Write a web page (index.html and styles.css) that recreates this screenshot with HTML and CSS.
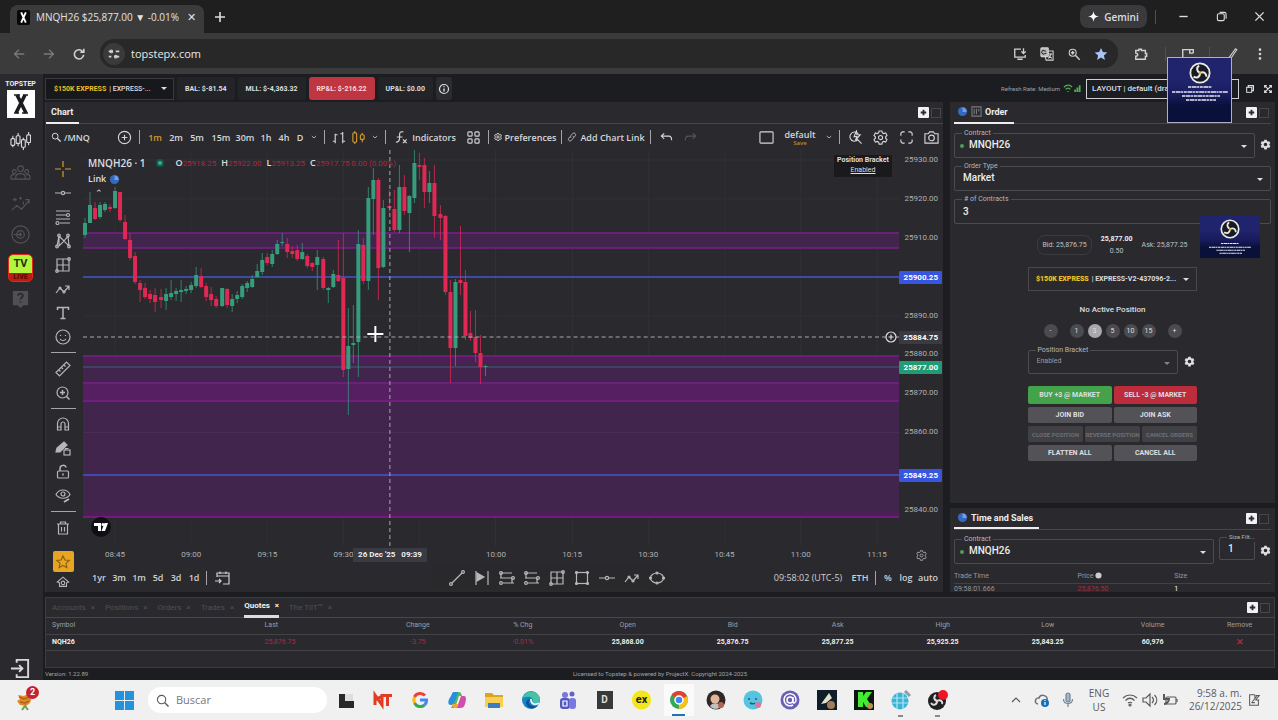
FILE: index.html
```html
<!DOCTYPE html>
<html lang="en">
<head>
<meta charset="utf-8">
<title>MNQH26 $25,877.00 ▼ -0.01%</title>
<link rel="stylesheet" href="styles.css">
</head>
<body>
<svg class="defs" aria-hidden="true">
  <symbol id="down" viewBox="0 0 16 16"><path d="M4.500 6.500l3.500 3 3.500-3"/></symbol>
  <symbol id="gear" viewBox="0 0 16 16"><path d="M6.500 1h3l.5 2 1.500.8 2-.6 1.400 2.500-1.400 1.500v1.600l1.400 1.500-1.400 2.500-2-.6-1.500.8-.5 2h-3l-.5-2-1.500-.8-2 .6-1.400-2.500 1.400-1.500V7.200L1.100 5.700l1.400-2.500 2 .6L6 3z"/><circle cx="8" cy="8" r="2.200"/></symbol>
  <symbol id="cog" viewBox="0 0 16 16"><path fill="currentColor" stroke="none" fill-rule="evenodd" d="M6.300 1h3.400l.5 2 1.200.7 2-.6 1.700 3-1.500 1.300v1.300l1.500 1.300-1.700 3-2-.6-1.200.7-.5 2H6.300l-.5-2-1.200-.7-2 .6-1.700-3 1.500-1.300V7.400L.9 6.100l1.700-3 2 .6L5.800 3zM8 5.400a2.600 2.600 0 100 5.200 2.600 2.600 0 000-5.200z"/></symbol>
  <symbol id="hline" viewBox="0 0 16 16"><path d="M0 8h6M10 8h6"/><circle cx="8" cy="8" r="1.600"/></symbol>
  <symbol id="fib" viewBox="0 0 16 16"><path d="M1 2h14M1 6h10M1 10h14M5 14h10"/><circle cx="13" cy="6" r="1.500"/><circle cx="2.500" cy="14" r="1.500"/></symbol>
  <symbol id="fib2" viewBox="0 0 16 16"><path d="M2 3h11M1 8h12M4 13h11M2 3v5M13 8v5"/><circle cx="2" cy="3" r="1.400"/><circle cx="14" cy="8" r="1.400"/><circle cx="2" cy="13" r="1.400"/></symbol>
  <symbol id="xabcd" viewBox="0 0 16 16"><path d="M2 13L4 3l5 5 4-5 1 10-5-5-5 5zM4 3v9"/><circle cx="4" cy="2.500" r="1.300"/><circle cx="13" cy="2.500" r="1.300"/><circle cx="2" cy="13.500" r="1.300"/><circle cx="14" cy="13.500" r="1.300"/></symbol>
  <symbol id="gann" viewBox="0 0 16 16"><path d="M2 2h12v12H2zM8 2v12M2 8h12M5 8h3V5"/><circle cx="2" cy="14" r="1.300"/><circle cx="14" cy="2" r="1.300"/></symbol>
  <symbol id="wave" viewBox="0 0 16 16"><path d="M1 12l4-5 4 4 5-6M10 5h4v4"/><circle cx="5" cy="7" r="1"/><circle cx="9" cy="11" r="1"/></symbol>
  <symbol id="pop" viewBox="0 0 12 12"><rect width="12" height="12" rx="1" fill="#f2f2f2" stroke="none"/><path d="M6 3v6M3 6h6" stroke="#2b2b2f" stroke-width="2"/></symbol>
  <symbol id="globe" viewBox="0 0 12 12"><circle cx="6" cy="6" r="5" fill="#3568c0" stroke="none"/><path d="M6 1.500v5h4.500A4.600 4.600 0 006 1.500z" fill="#6f9fe2" stroke="none"/></symbol>
  <symbol id="obs" viewBox="0 0 24 24"><circle cx="12" cy="12" r="10.500" fill="#161a26" stroke="#ece9e1" stroke-width="2"/><path d="M12 12c-4-2-4-6-1-8M12 12c4-2 7 0 7 4M12 12c0 5-4 6-7 4" stroke="#ece9e1" stroke-width="2.200"/><circle cx="12" cy="12" r="1.500" fill="#ddba3c" stroke="none"/></symbol>
  <symbol id="dots" viewBox="0 0 60 16"><path d="M18 2h24M2 7h56M12 11h38M16 15h30" stroke="#e6e8f4" stroke-width="1.500" stroke-dasharray="3 .6 5 .5 2 .7"/></symbol>
</svg>

<header class="tabstrip">
  <div class="tab"><svg class="favicon" viewBox="0 0 14 16"><rect width="14" height="16" rx="2" fill="#080808" stroke="none"/><path d="M4.500 2.500l5 11M9.500 2.500l-5 11" stroke="#fff" stroke-width="2"/></svg><span>MNQH26 $25,877.00 ▼ -0.01%</span><button aria-label="Close tab">✕</button></div>
  <button class="newtab" aria-label="New tab"><svg viewBox="0 0 16 16"><path d="M8 3v10M3 8h10" stroke-width="1.600"/></svg></button>
  <span class="grow"></span>
  <button class="gemini"><svg viewBox="0 0 12 12"><path d="M6 0c.5 4 2 5.500 6 6-4 .5-5.500 2-6 6-.5-4-2-5.500-6-6 4-.5 5.500-2 6-6z" fill="#fff" stroke="none"/></svg>Gemini</button>
  <i class="vr"></i>
  <div class="winbtns">
    <button aria-label="Minimize"><svg viewBox="0 0 12 12"><path d="M1.500 6h9" stroke-width="1.500"/></svg></button>
    <button aria-label="Restore"><svg viewBox="0 0 12 12"><rect x="1.500" y="3" width="7.500" height="7.500" rx="1.500"/><path d="M4 1.500h5a2 2 0 012 2v5"/></svg></button>
    <button aria-label="Close"><svg viewBox="0 0 12 12"><path d="M1.500 1.500l9 9M10.500 1.500l-9 9" stroke-width="1.500"/></svg></button>
  </div>
</header>

<nav class="urlbar">
  <button class="dim" aria-label="Back"><svg viewBox="0 0 16 16"><path d="M14 8H3M8 3L3 8l5 5" stroke-width="1.600"/></svg></button>
  <button class="dim" aria-label="Forward"><svg viewBox="0 0 16 16"><path d="M2 8h11M8 3l5 5-5 5" stroke-width="1.600"/></svg></button>
  <button aria-label="Reload"><svg viewBox="0 0 16 16"><path d="M12.500 5.500A5.300 5.300 0 1013.300 9M13.500 2v4h-4" stroke-width="1.800"/></svg></button>
  <div class="omnibox">
    <span class="siteinfo"><svg viewBox="0 0 16 16"><path d="M2 5h4M9 11h5" stroke-width="2"/><path d="M10 5h4M2 11h3" stroke-width="2"/><circle cx="5" cy="5" r="1.500"/><circle cx="10" cy="11" r="1.500"/></svg></span>
    <input aria-label="Address" value="topstepx.com">
    <button aria-label="Install"><svg viewBox="0 0 16 16"><path d="M9 2.500H2v9h12V9M5 14h6M12 1.500v6M9.500 5l2.500 2.500L14.500 5" stroke-width="1.500"/></svg></button>
    <button aria-label="Translate"><svg viewBox="0 0 16 16"><rect x="1" y="1" width="8.500" height="10" rx="1" fill="#bbb"/><path d="M9.500 4.500H15V15H7l-1-4M9 8h5M11.500 7v1M9.500 13l3.500-5M10.500 10l3 3"/><path d="M7 4.500H5.200a2 2 0 100 3h1.500V6.500" stroke="#333"/></svg></button>
    <button aria-label="Zoom"><svg viewBox="0 0 16 16"><circle cx="6.500" cy="6.500" r="4"/><path d="M9.500 9.500l5 5M4.500 6.500h4M6.500 4.500v4" stroke-width="1.600"/></svg></button>
    <button aria-label="Bookmark"><svg viewBox="0 0 16 16"><path d="M8 1l2.100 4.800 5.100.5-3.900 3.400 1.200 5.100L8 12.100l-4.500 2.700 1.200-5.100L.8 6.300l5.100-.5z" fill="#a9c3f8" stroke="none"/></svg></button>
  </div>
  <button class="ext" aria-label="Extensions"><svg viewBox="0 0 16 16"><path d="M2 4h3.500V2.500h3V4H13v3.500h1.500v3H13V14H2v-3.500c3 0 3-3.500 0-3.500z" stroke-width="1.600"/></svg></button>
  <i class="vr"></i>
  <button class="ext2" aria-label="Side panel"><svg viewBox="0 0 16 16"><path d="M8 13H2V3h12v4M10 3v4h4" stroke-width="1.600"/></svg></button>
  <i class="vr"></i>
  <button class="ext2" aria-label="Edit"><svg viewBox="0 0 16 16"><path d="M4 13L12 2l1.500 1L6 14z"/></svg></button>
  <button aria-label="Menu"><svg viewBox="0 0 16 16"><g fill="currentColor" stroke="none"><circle cx="8" cy="3" r="1.500"/><circle cx="8" cy="8" r="1.500"/><circle cx="8" cy="13" r="1.500"/></g></svg></button>
</nav>

<main class="app">
  <aside class="side">
    <div class="brand">TOPSTEP</div>
    <div class="brandx"><svg viewBox="0 0 28 28"><path d="M10 5l9 18M18 5L9 23" stroke="#1c1c1f" stroke-width="3.600"/><path d="M7 5h6M16 5h5M7 23h5M15 23h6" stroke="#1c1c1f" stroke-width="1.500"/></svg></div>
    <button class="on" aria-label="Charts"><svg viewBox="0 0 22 22"><path d="M3 5v12M8.500 2v14M14 7v13M19.500 1v14"/><g fill="#2a2a2e"><rect x="1" y="8" width="4" height="7" rx="1"/><rect x="6.500" y="5" width="4" height="8" rx="1"/><rect x="12" y="9" width="4" height="8" rx="1"/><rect x="17.500" y="4" width="4" height="8" rx="1"/></g></svg></button>
    <button aria-label="Leaderboard"><svg viewBox="0 0 22 22"><circle cx="11" cy="7" r="3"/><circle cx="4.500" cy="10" r="2"/><circle cx="17.500" cy="10" r="2"/><path d="M6 18v-2c0-5 10-5 10 0v2zM1 18v-2c0-2 2-3 4-3M21 18v-2c0-2-2-3-4-3M1 18h20"/></svg></button>
    <button aria-label="Analysis"><svg viewBox="0 0 22 22"><path d="M2 18l5-5 5 4 8-9M16 7h4v4M5 5v4M3 7h4M11 4v3M9.500 5.500h3M14 9v3"/></svg></button>
    <button aria-label="Replay"><svg viewBox="0 0 22 22"><circle cx="11" cy="11" r="9"/><circle cx="11" cy="11" r="4"/><path d="M4 11h8M10 9l2 2-2 2"/></svg></button>
    <button class="tv" aria-label="TV Live"><b>TV</b><em>LIVE</em></button>
    <button aria-label="Help"><svg viewBox="0 0 22 22"><path d="M3 2h16v15h-5l-3 3-3-3H3z" fill="#505053" stroke="none"/><path d="M8.500 7c0-3 5-3 5 0 0 2-2.500 2-2.500 4M11 13v1.500" stroke="#29292d" stroke-width="1.800"/></svg></button>
    <span class="grow"></span>
    <button class="on out" aria-label="Log out"><svg viewBox="0 0 22 22"><path d="M7 5V2h12v18H7v-3M1 11h12M9.500 7.500L13 11l-3.500 3.500" stroke-width="2"/></svg></button>
  </aside>

  <div class="work">
    <div class="accountbar">
      <div class="acct"><b>$150K EXPRESS</b> | EXPRESS-...<i class="tri"></i></div>
      <span class="stat">BAL: $-81.54</span>
      <span class="stat">MLL: $-4,363.32</span>
      <span class="stat loss">RP&amp;L: $-216.22</span>
      <span class="stat">UP&amp;L: $0.00</span>
      <button class="info" aria-label="Info"><svg viewBox="0 0 12 12"><circle cx="6" cy="6" r="4.500"/><path d="M6 5.500v3M6 3.200v1" stroke-width="1.400"/></svg></button>
      <span class="grow"></span>
      <span class="feed">Refresh Rate: Medium</span>
      <svg class="sig" viewBox="0 0 20 10"><path d="M1 3.500c3-3 7-3 9 0M3 6c1.500-2 4-2 5 0" stroke="#4caf50" stroke-width="1.500"/><path d="M5.500 8v1M13.500 6v3M16 4v5M18.500 1.500V9" stroke="#4caf50" stroke-width="2"/></svg>
      <select class="layout" aria-label="Layout"><option>LAYOUT | default (draft)</option></select>
      <button class="mini" aria-label="Windows"><svg viewBox="0 0 12 12"><rect x="2" y="4" width="6" height="6"/><path d="M4 4V2h6v6H8" stroke-width="1.600"/></svg></button>
      <button class="mini" aria-label="Fullscreen"><svg viewBox="0 0 12 12"><path d="M2 4.500V2h2.500M7.500 2H10v2.500M10 7.500V10H7.500M4.500 10H2V7.500M2.500 2.500l7 7M9.500 2.500l-7 7" stroke-width="1.400"/></svg></button>
    </div>

    <div class="panels">
      <section class="chart">
        <div class="phead"><h2>Chart</h2><span class="grow"></span><svg class="pop"><use href="#pop"/></svg><i class="box"></i></div>
        <div class="ctools">
          <button class="c61 txt"><svg viewBox="0 0 12 12"><circle cx="5" cy="5" r="3.500"/><path d="M7.500 7.500l4 4" stroke-width="1.500"/></svg>/MNQ</button>
          <button class="c24" aria-label="Compare"><svg viewBox="0 0 16 16"><circle cx="8" cy="8" r="6.500"/><path d="M8 5v6M5 8h6"/></svg></button>
          <i class="sep"></i>
          <button class="c24 gold">1m</button><button class="c18">2m</button><button class="c24">5m</button><button class="c24">15m</button><button class="c24">30m</button><button class="c18">1h</button><button class="c18">4h</button><button class="c14">D</button>
          <button class="c14" aria-label="Intervals"><svg><use href="#down"/></svg></button>
          <i class="sep"></i>
          <button class="c20" aria-label="Bars"><svg viewBox="0 0 16 16"><path d="M2 12h2.500V4M4.500 4v10M4.500 5H7M10 4h2.500v8H15M12.500 2v12"/></svg></button>
          <button class="c20 gold" aria-label="Candles"><svg viewBox="0 0 16 16"><rect x="2" y="3" width="4" height="10" rx="1"/><rect x="10" y="5" width="4" height="5" rx="1"/><path d="M4 1v2M4 13v2M12 3v2M12 10v3"/></svg></button>
          <button class="c14" aria-label="Chart styles"><svg><use href="#down"/></svg></button>
          <i class="sep"></i>
          <button class="c72 ind"><svg viewBox="0 0 16 16"><path d="M10 2C5 1 6 5 6 8s-.5 5-4 5M3 7.500h6M9.500 10l4 4M13.500 10l-4 4"/></svg>Indicators</button>
          <button class="c24" aria-label="Templates"><svg viewBox="0 0 16 16"><rect x="2" y="2" width="4.500" height="4.500" rx="1"/><rect x="9.500" y="2" width="4.500" height="4.500" rx="1"/><rect x="2" y="9.500" width="4.500" height="4.500" rx="1"/><rect x="9.500" y="9.500" width="4.500" height="4.500" rx="1"/></svg></button>
          <i class="sep"></i>
          <button class="c66 pref"><svg><use href="#gear"/></svg>Preferences</button>
          <i class="sep"></i>
          <button class="c82"><svg viewBox="0 0 16 16"><path d="M6.500 9.500c-2-2-1-3 0-4l2.500-3c3-2.500 6.500 1 4 4l-2 2M9.500 6.500c2 2 1 3 0 4L7 13.500c-3 2.500-6.500-1-4-4l2-2"/></svg>Add Chart Link</button>
          <i class="sep"></i>
          <button class="c24" aria-label="Undo"><svg viewBox="0 0 16 16"><path d="M5.500 3.500L2.500 6.500l3 3M2.500 6.500h8c2 0 3 1.500 3 4.500"/></svg></button>
          <button class="c24 faint" aria-label="Redo"><svg viewBox="0 0 16 16"><path d="M10.500 3.500l3 3-3 3M13.500 6.500h-8c-2 0-3 1.500-3 4.500"/></svg></button>
          <span class="grow"></span>
          <button class="c24" aria-label="Layout setup"><svg viewBox="0 0 16 16"><rect x="1" y="2" width="14" height="12" rx="1"/></svg></button>
          <button class="c44 save"><span>default</span><small>Save</small></button>
          <button class="c14" aria-label="Manage layouts"><svg><use href="#down"/></svg></button>
          <i class="sep"></i>
          <button class="c24" aria-label="Quick search"><svg viewBox="0 0 16 16"><path d="M11 4A5 5 0 106 12c2 0 4-.5 5-2M10 10l4.500 4.500M9 1L6.500 7h3L8 11l5-6H9.500z"/></svg></button>
          <button class="c26" aria-label="Settings"><svg><use href="#gear"/></svg></button>
          <button class="c26" aria-label="Fullscreen"><svg viewBox="0 0 16 16"><path d="M2 6V3.500L3.500 2H6M10 2h2.500L14 3.500V6M14 10v2.500L12.500 14H10M6 14H3.500L2 12.500V10"/></svg></button>
          <button class="c24" aria-label="Snapshot"><svg viewBox="0 0 16 16"><path d="M1 4h3.500L6 2h4l1.500 2H15v10H1z"/><circle cx="8" cy="8.500" r="3"/></svg></button>
        </div>

        <div class="cbody">
          <div class="draw">
            <button class="gold" aria-label="Cross"><svg viewBox="0 0 16 16"><path d="M8 0v6M8 10v6M0 8h6M10 8h6"/></svg></button>
            <button aria-label="Horizontal line"><svg><use href="#hline"/></svg></button>
            <button aria-label="Fibonacci"><svg><use href="#fib"/></svg></button>
            <button aria-label="Patterns"><svg><use href="#xabcd"/></svg></button>
            <button aria-label="Gann box"><svg><use href="#gann"/></svg></button>
            <button aria-label="Waves"><svg><use href="#wave"/></svg></button>
            <button aria-label="Text"><svg viewBox="0 0 16 16"><path d="M2.500 5V2.500h11V5M8 2.500v11M5.500 13.500h5" stroke-width="1.500"/></svg></button>
            <button aria-label="Icons"><svg viewBox="0 0 16 16"><circle cx="8" cy="8" r="7"/><path d="M5 10c1.500 2 4.500 2 6 0M5.500 6v1M10.500 6v1"/></svg></button>
            <hr>
            <button aria-label="Measure"><svg viewBox="0 0 16 16"><path d="M1 11.500L11.500 1 15 4.500 4.500 15zM4 9l1.500 1.500M6.500 6.500L8 8M9 4l1.500 1.500"/></svg></button>
            <button aria-label="Zoom in"><svg viewBox="0 0 16 16"><circle cx="7.500" cy="7.500" r="5.500"/><path d="M11.500 11.500l3 3M7.500 5v5M5 7.500h5" stroke-width="1.500"/></svg></button>
            <hr>
            <button aria-label="Magnet"><svg viewBox="0 0 16 16"><path d="M2.500 14V7.500a5.500 5.500 0 0111 0V14H10V8a2 2 0 00-4 0v6zM2.500 11H6M10 11h3.500"/></svg></button>
            <button aria-label="Keep drawing"><svg viewBox="0 0 16 16"><path d="M1 12l1-4 7-6 3 3-7 7z" fill="currentColor"/><rect x="9" y="10" width="6" height="5"/><path d="M10.500 10V8.500h3"/></svg></button>
            <button aria-label="Lock"><svg viewBox="0 0 16 16"><rect x="2.500" y="7" width="11" height="7" rx="1"/><path d="M5 7V4.500c0-4 6-4 6-1M8 9.500v2" stroke-width="1.500"/></svg></button>
            <button aria-label="Hide"><svg viewBox="0 0 16 16"><path d="M1 6.500c3-6 11-6 14 0-3 5-11 5-14 0z"/><circle cx="8" cy="6" r="2"/><path d="M9 14l5-3" stroke-width="2"/></svg></button>
            <hr>
            <button aria-label="Remove"><svg viewBox="0 0 16 16"><path d="M2 4h12M5.500 4V2h5v2M3.500 4v10h9V4M6.500 7v4.500M9.500 7v4.500"/></svg></button>
            <button class="star" aria-label="Favorites"><svg viewBox="0 0 16 16"><path d="M8 2l1.900 4 4.300.4-3.200 3 .9 4.300L8 11.500l-3.900 2.200.9-4.300-3.200-3L6.100 6z" stroke="#8c6010"/></svg></button>
            <button class="last" aria-label="More"><svg viewBox="0 0 16 16"><path d="M1.500 8L8 2.500 14.500 8 12 9v4H4V9z"/><circle cx="8" cy="9" r="2"/></svg></button>
          </div>

          <div class="cmain">
            <div class="plotrow">
              <div class="plot">
                <svg class="canvas" viewBox="83 150 815 396" preserveAspectRatio="none">
                  <path d="M115 150v396M191 150v396M267 150v396M343 150v396M419 150v396M495 150v396M572 150v396M648 150v396M724 150v396M800 150v396M876 150v396M83 160h815M83 199h815M83 238h815M83 316h815" stroke="#303035"/>
                  <path d="M83 233h815v15H83zM83 356h815v161H83z" fill="#42254c" stroke="none"/>
                  <path d="M83 383h815v18H83z" fill="#551f62" stroke="none"/>
                  <path d="M83 357h815v6H83zM83 511h815v6H83z" fill="#4c2054" stroke="none"/>
                  <path d="M83 432.500h815" stroke="#4a2c52"/>
                  <path d="M83 233h815M83 248h815M83 356h815M83 383h815M83 401h815M83 517h815" stroke="#7b1e8a" stroke-width="1.600"/>
                  <path d="M83 277h815M83 475h815" stroke="#4355cf" stroke-width="1.600"/>
                  <path d="M83 367h815" stroke="#40617a" stroke-width="1"/>
                  <path class="g" d="M85 218v20M90 192v31M100 202v17M105 202v10M115 187v22M166 288v22M171 280v20M176 288v13M181 280v22M186 286v8M191 282v11M196 267v21M222 288v19M232 294v18M237 291v12M242 284v15M247 281v11M252 275v13M257 264v14M262 253v22M272 250v17M277 240v15M282 233v13M302 243v17M317 250v40M328 287v16M333 270v18M348 308v107M353 305v58M358 230v147M368 187v103M373 168v67M383 200v68M399 165v68M409 195v57M414 150v53M429 171v32M455 279v87M485 365v11"/>
                  <path class="r" d="M95 202v18M110 204v8M120 192v30M125 215v25M130 233v27M135 252v32M140 280v22M145 283v16M150 290v13M155 288v24M161 289v19M201 268v20M206 283v18M211 287v19M216 296v12M227 288v20M267 253v12M287 238v20M292 246v12M297 245v16M307 254v14M312 262v9M323 257v33M338 240v42M343 233v144M363 238v46M378 178v122M389 190v22M394 190v42M404 175v40M419 153v27M424 158v50M434 165v73M440 205v35M445 215v80M450 280v103M460 226v69M465 270v70M470 311v30M475 310v52M480 335v49"/>
                  <path class="g body" d="M85 223v12M90 205v18M100 205v12M105 204v6M115 191v17M166 294v7M171 293v4M176 291v3M181 290v2M186 289v2M191 285v5M196 275v11M222 288v18M232 299v7M237 295v4M242 286v11M247 283v5M252 279v8M257 271v6M262 260v12M272 254v10M277 244v10M282 242v1M302 252v7M317 257v8M328 288v2M333 274v13M348 346v23M353 343v2M358 244v98M368 198v83M373 180v19M383 208v59M399 187v43M409 196v17M414 163v35M429 183v9M455 282v66M485 366v1"/>
                  <path class="r body" d="M95 208v11M110 207v2M120 192v28M125 222v17M130 240v18M135 256v26M140 283v7M145 288v9M150 294v5M155 295v7M161 297v3M201 276v11M206 286v11M211 294v6M216 299v7M227 289v16M267 257v6M287 244v8M292 251v3M297 250v9M307 256v10M312 263v4M323 259v29M338 275v6M343 278v92M363 245v36M378 180v88M389 206v2M394 209v21M404 187v24M419 165v2M424 165v27M434 183v33M440 214v4M445 216v76M450 292v56M460 280v3M465 282v54M470 333v5M475 337v16M480 353v14"/>
                  <path d="M83 337h815M389.500 150v396" stroke="#a8a8ac" stroke-dasharray="4 3"/>
                  <path d="M367 334h16M375 326v16" stroke="#fff" stroke-width="2"/>
                </svg>
                <div class="legend">
                  <p><b>MNQH26 · 1</b><i class="live"></i><span>O<em>25918.25</em></span><span>H<em>25922.00</em></span><span>L<em>25913.25</em></span><span>C<em>25917.75 0.00 (0.00%)</em></span></p>
                  <p class="lk">Link <svg><use href="#globe"/></svg></p>
                  <p class="up">⌃</p>
                </div>
                <div class="bracket"><b>Position Bracket</b><u>Enabled</u></div>
                <svg class="tvlogo" viewBox="0 0 20 20"><circle cx="10" cy="10" r="10" fill="#101014" stroke="none"/><path d="M3 6h7v8H7V9H3zM13.500 6H17l-3 8h-3.500z" fill="#fff" stroke="none"/><circle cx="12" cy="7.500" r="1.500" fill="#fff" stroke="none"/></svg>
                <svg class="addp" viewBox="0 0 12 12"><circle cx="6" cy="6" r="5" fill="#2a2a2e"/><path d="M6 3.500v5M3.500 6h5"/></svg>
              </div>
              <div class="prices">
                <span>25930.00</span><span>25920.00</span><span>25910.00</span><span></span><span>25890.00</span><span>25880.00</span><span>25870.00</span><span>25860.00</span><span></span><span>25840.00</span>
                <b class="tag blue" style="top:32%">25900.25</b><b class="tag grey" style="top:47.200%">25884.75</b><b class="tag green" style="top:54.800%">25877.00</b><b class="tag blue" style="top:82%">25849.25</b>
              </div>
            </div>
            <div class="timerow"><div class="times"><span>08:45</span><span>09:00</span><span>09:15</span><span>09:30</span><span></span><span>10:00</span><span>10:15</span><span>10:30</span><span>10:45</span><span>11:00</span><span>11:15</span><b>26 Dec '25 &nbsp; 09:39</b></div>
              <button class="axis" aria-label="Axis settings"><svg><use href="#gear"/></svg></button></div>
            <div class="ranges">
              <button class="c20">1yr</button><button class="c20">3m</button><button class="c20">1m</button><button class="c18">5d</button><button class="c18">3d</button><button class="c18">1d</button><i class="sep"></i>
              <button class="c24" aria-label="Go to date"><svg viewBox="0 0 16 16"><path d="M3 7V3h12v11H9M3 6h12M6 1.500V4M12 1.500V4M1 11h6M5 9l2 2-2 2"/></svg></button>
              <span class="grow2"></span>
              <div class="fav">
                <button aria-label="Trend line"><svg viewBox="0 0 16 16"><path d="M3 13L13 3"/><circle cx="2" cy="14" r="1.400"/><circle cx="14" cy="2" r="1.400"/></svg></button>
                <button aria-label="Flag"><svg viewBox="0 0 16 16"><path d="M2 1v14M14 1v14"/><path d="M3 3l7 4-7 4z" fill="currentColor"/></svg></button>
                <button aria-label="Fibonacci"><svg><use href="#fib2"/></svg></button>
                <button aria-label="Fib extension"><svg><use href="#fib2"/></svg></button>
                <button aria-label="Gann"><svg><use href="#gann"/></svg></button>
                <button aria-label="Rectangle"><svg viewBox="0 0 16 16"><rect x="2.500" y="2.500" width="11" height="11"/><circle cx="2.500" cy="2.500" r="1"/><circle cx="13.500" cy="2.500" r="1"/><circle cx="2.500" cy="13.500" r="1"/><circle cx="13.500" cy="13.500" r="1"/></svg></button>
                <button aria-label="Horizontal"><svg><use href="#hline"/></svg></button>
                <button aria-label="Path"><svg><use href="#wave"/></svg></button>
                <button aria-label="Ellipse"><svg viewBox="0 0 16 16"><ellipse cx="8" cy="8" rx="6.500" ry="5"/><circle cx="8" cy="3" r="1"/><circle cx="8" cy="13" r="1"/><circle cx="1.500" cy="8" r="1"/><circle cx="14.500" cy="8" r="1"/></svg></button>
              </div>
              <span class="grow"></span>
              <button class="clock">09:58:02 (UTC-5)</button><button class="c24">ETH</button><i class="sep"></i><button class="c18">%</button><button class="c18">log</button><button class="c26">auto</button>
            </div>
          </div>
        </div>
      </section>

      <div class="right">
        <section class="order">
          <div class="phead"><h2><svg><use href="#globe"/></svg><svg viewBox="0 0 12 12"><path d="M1 1h10v10H1zM3.500 3v6M6 3v6M8.500 3v3" stroke="#77777c"/></svg>Order</h2><span class="grow"></span><svg class="pop"><use href="#pop"/></svg><i class="box"></i></div>
          <div class="frow"><div class="field dot"><label for="oc">Contract</label><select id="oc"><option>MNQH26</option></select></div><button class="cog" aria-label="Contract settings"><svg><use href="#cog"/></svg></button></div>
          <div class="field"><label for="ot">Order Type</label><select id="ot"><option>Market</option></select></div>
          <div class="field"><label for="oq"># of Contracts</label><input id="oq" value="3"></div>
          <div class="quote"><span class="bid">Bid: 25,876.75</span><span class="mid"><b>25,877.00</b>0.50</span><span>Ask: 25,877.25</span></div>
          <div class="acct2"><b>$150K EXPRESS</b><span>| EXPRESS-V2-437096-2...</span><i class="tri"></i></div>
          <p class="nopos">No Active Position</p>
          <div class="qty"><button>-</button><button class="gapl">1</button><button class="sel">3</button><button>5</button><button>10</button><button>15</button><button class="gapl">+</button></div>
          <div class="frow pb"><div class="field"><label for="pbk">Position Bracket</label><select id="pbk"><option>Enabled</option></select></div><button class="cog" aria-label="Bracket settings"><svg><use href="#cog"/></svg></button></div>
          <div class="acts">
            <button class="buy">BUY +3 @ MARKET</button><button class="sell">SELL -3 @ MARKET</button>
            <button class="two">JOIN BID</button><button class="two">JOIN ASK</button>
            <button class="three" disabled>CLOSE POSITION</button><button class="three" disabled>REVERSE POSITION</button><button class="three" disabled>CANCEL ORDERS</button>
            <button class="two">FLATTEN ALL</button><button class="two">CANCEL ALL</button>
          </div>
        </section>
        <section class="sales">
          <div class="phead"><h2><svg><use href="#globe"/></svg>Time and Sales</h2><span class="grow"></span><svg class="pop"><use href="#pop"/></svg><i class="box"></i></div>
          <div class="frow"><div class="field dot"><label for="sc">Contract</label><select id="sc"><option>MNQH26</option></select></div><div class="field small"><label for="sf">Size Filt...</label><input id="sf" value="1"></div><button class="cog" aria-label="Sales settings"><svg><use href="#cog"/></svg></button></div>
          <table><thead><tr><th>Trade Time</th><th>Price <svg viewBox="0 0 8 8"><circle cx="4" cy="4" r="3.500" fill="#ccc" stroke="none"/></svg></th><th>Size</th></tr></thead><tbody><tr><td>09:58:01.666</td><td class="neg">25,876.50</td><td class="w">1</td></tr></tbody></table>
        </section>
      </div>
    </div>

    <section class="quotes">
      <div class="qtabs"><button>Accounts<i>×</i></button><button>Positions<i>×</i></button><button>Orders<i>×</i></button><button>Trades<i>×</i></button><button class="act">Quotes<i>×</i></button><button>The TilT™<i>×</i></button><span class="grow"></span><svg class="pop"><use href="#pop"/></svg><i class="box"></i></div>
      <table>
        <colgroup><col class="k1"><col class="k2"><col><col><col><col><col><col><col><col><col class="k3"></colgroup>
        <thead><tr><th>Symbol</th><th>Last</th><th>Change</th><th>% Chg</th><th>Open</th><th>Bid</th><th>Ask</th><th>High</th><th>Low</th><th>Volume</th><th>Remove</th></tr></thead>
        <tbody><tr><td>NQH26</td><td class="neg">25,876.75</td><td class="neg">-3.75</td><td class="neg">-0.01%</td><td>25,868.00</td><td>25,876.75</td><td>25,877.25</td><td>25,925.25</td><td>25,843.25</td><td>60,976</td><td><button class="neg" aria-label="Remove NQH26">✕</button></td></tr></tbody>
      </table>
    </section>
    <footer><span>Version: 1.22.89</span><span>Licensed to Topstep &amp; powered by ProjectX. Copyright 2024-2025</span><span></span></footer>
  </div>
</main>

<div class="thumb t1"><svg class="logo"><use href="#obs"/></svg><svg class="lines"><use href="#dots"/></svg></div>
<div class="thumb t2"><svg class="logo"><use href="#obs"/></svg><svg class="lines"><use href="#dots"/></svg></div>

<div class="taskbar">
  <button class="weather" aria-label="Widgets"><svg viewBox="0 0 24 24"><path d="M4 7l6 1 5-3 3 4-2 6-4 3-6-1-3-4 3-2z" fill="#e08a26" stroke="none"/><path d="M5 9l5 2 5-2M6 14l5 1 4-2" stroke="#b4601a" stroke-width="1.500"/><path d="M8 22l3-4 3 4" stroke="#66a64b" stroke-width="2"/></svg><b>2</b></button>
  <button class="start" aria-label="Start"><svg viewBox="0 0 20 20"><path d="M0 0h9.500v9.500H0zM10.500 0H20v9.500h-9.500zM0 10.500h9.500V20H0zM10.500 10.500H20V20h-9.500z" fill="#2493dc" stroke="none"/></svg></button>
  <label class="search"><svg viewBox="0 0 14 14"><circle cx="6" cy="6" r="4.500"/><path d="M9.500 9.500l4 4" stroke-width="1.500"/></svg><input placeholder="Buscar" aria-label="Buscar"></label>
  <div class="apps">
    <button aria-label="Task view"><svg viewBox="0 0 20 20"><path d="M6 4h11v11H6z" fill="#ddd" stroke="none"/><path d="M3 4h6v7h9v7H3z" fill="#28282a" stroke="none"/></svg></button>
    <button aria-label="NinjaTrader"><svg viewBox="0 0 20 20"><path d="M2 15V5l7 10V4M8 5.500h11M14.500 6v10M2 10l9-5" stroke="#e33b22" stroke-width="3"/></svg></button>
    <button aria-label="Google"><svg viewBox="0 0 20 20"><g stroke-width="3"><path d="M15 5.500A6.500 6.500 0 004.500 7" stroke="#ea4335"/><path d="M4.500 7a7 7 0 000 6" stroke="#fbbc05"/><path d="M4.500 13a6.500 6.500 0 0010 2" stroke="#34a853"/><path d="M14.500 15a6 6 0 002-5H10" stroke="#4285f4"/></g></svg></button>
    <button aria-label="Copilot"><svg viewBox="0 0 20 20"><path d="M7 2h5L8 15H4c-4 0-3-5 0-9 1-2 1-4 3-4z" fill="#278ee0" stroke="none"/><path d="M11 2c3 0 3 1 4 4h-3L8 18H4l5-9z" fill="#58b757" stroke="none"/><path d="M14 6h3c3 0 2 5 1 8s-2 4-5 4H8c2 0 3-3 3.500-5z" fill="#d04fae" stroke="none"/><path d="M5 14h6l-1 4H8c-2 0-3-2-3-4z" fill="#f0a636" stroke="none"/></svg></button>
    <button aria-label="Explorer"><svg viewBox="0 0 20 20"><path d="M1 3h7l2 2h9v12H1z" fill="#dca520" stroke="none"/><path d="M1 7h18v10H1z" fill="#f7cf54" stroke="none"/><path d="M4 13h12v5H4z" fill="#397dc4" stroke="none"/></svg></button>
    <button aria-label="Edge"><svg viewBox="0 0 20 20"><circle cx="10" cy="10" r="9" fill="#1685c4" stroke="none"/><path d="M2 8c2-9 16-8 17 1 0 4-5 5-7 3 1-6-6-6-10-4z" fill="#47c3a2" stroke="none"/><path d="M9 9c-3 4 0 8 7 7-3 4-10 3-11-3 0-2 2-4 4-4z" fill="#0c5099" stroke="none"/><path d="M10 9c0 6 5 6 8 4" stroke="#eee" stroke-width="2"/></svg></button>
    <button aria-label="Teams"><svg viewBox="0 0 20 20"><circle cx="7" cy="5" r="3" fill="#7779d9" stroke="none"/><circle cx="14" cy="4" r="2.500" fill="#6264c0" stroke="none"/><rect x="2" y="8" width="10" height="11" rx="3" fill="#5258c0" stroke="none"/><rect x="11" y="8" width="7" height="11" rx="3" fill="#7878e0" stroke="none"/><path d="M5 11h4v5H5z" stroke="#fff"/></svg></button>
    <button class="ic dk">D</button>
    <button class="ic ex">ex</button>
    <button class="chr" aria-label="Chrome"><svg viewBox="0 0 20 20"><circle cx="10" cy="10" r="9" fill="#36a852" stroke="none"/><path d="M10 10L2.500 5a9 9 0 0115.500 1z" fill="#e24234" stroke="none"/><path d="M10 10l8.500-4c2 6-2 13-8.500 13z" fill="#fbc116" stroke="none"/><circle cx="10" cy="10" r="4" fill="#4285f4" stroke="#fff" stroke-width="1.500"/></svg></button>
    <button aria-label="Profile 1"><svg viewBox="0 0 20 20"><circle cx="10" cy="10" r="9.500" fill="#302825" stroke="none"/><circle cx="9" cy="9" r="4.500" fill="#e2b69c" stroke="none"/><path d="M4 16c3-4 9-3 11 0-3 4-8 4-11 0z" fill="#bfc0c2" stroke="none"/><circle cx="15" cy="15" r="3" fill="#b5644e" stroke="none"/></svg></button>
    <button aria-label="Profile 2"><svg viewBox="0 0 20 20"><circle cx="10" cy="10" r="9.500" fill="#54c4e1" stroke="none"/><path d="M6 8v2M13 8v2M7 13c2 1 4 1 5 0" stroke="#225b72" stroke-width="1.500"/><circle cx="15" cy="15" r="3" fill="#df779a" stroke="none"/></svg></button>
    <button aria-label="Mail"><svg viewBox="0 0 20 20"><circle cx="10" cy="10" r="9.500" fill="#6860b5" stroke="none"/><path d="M13 7v5c0 2 3 1 3-2a6 6 0 10-3 5" stroke="#fff" stroke-width="1.500"/><circle cx="10" cy="10" r="3" stroke="#fff" stroke-width="1.500"/></svg></button>
    <button aria-label="Trading"><svg viewBox="0 0 20 20"><path d="M0 0h20v20H0z" fill="#101e27" stroke="none"/><path d="M12 3L4 14l5-1 6-5z" fill="#e2e0ce" stroke="none"/><circle cx="14" cy="15" r="4" fill="#a27e58" stroke="none"/></svg></button>
    <button aria-label="Kick"><svg viewBox="0 0 20 20"><path d="M0 0h20v20H0z" fill="#101410" stroke="none"/><path d="M4 2h5v4l3-4h6l-5 7 5 8h-6l-3-5v5H4z" fill="#43eb32" stroke="none"/><circle cx="16" cy="16" r="3" fill="#b69458" stroke="none"/></svg></button>
    <button class="run" aria-label="Network"><svg viewBox="0 0 20 20"><circle cx="9" cy="11" r="8.500" fill="#3bb3d7" stroke="none"/><path d="M1 8h16M1 13h16M6 3v16M12 3v16" stroke="#b3e6f3"/><path d="M14 1l5 5" stroke="#8d9daa" stroke-width="3"/></svg></button>
    <button class="run" aria-label="OBS"><svg viewBox="0 0 20 20"><circle cx="9" cy="11" r="9" fill="#211f22" stroke="none"/><path d="M9 11c-4-2-3-5-1-6M9 11c4-2 6 1 5 3M9 11c0 4-4 5-6 2" stroke="#ddd" stroke-width="2"/><circle cx="15" cy="5" r="5" fill="#ec1826" stroke="none"/></svg></button>
  </div>
  <span class="grow"></span>
  <div class="tray">
    <svg viewBox="0 0 16 16"><path d="M4 10l4-4 4 4"/></svg>
    <svg viewBox="0 0 16 16"><path d="M4 12C-1 11 2 5 5 6c2-5 9-2 8 2" stroke="#68707a" stroke-width="1.500"/><circle cx="11" cy="11" r="4" fill="#166fb9" stroke="none"/><path d="M11 10v3M11 8v1" stroke="#fff"/></svg>
    <svg viewBox="0 0 16 16"><rect x="6" y="1" width="4" height="9" rx="2" fill="#a3b7c8" stroke="#6f8296"/><path d="M3.500 7c0 6 9 6 9 0M8 12v3" stroke="#6f8296"/></svg>
  </div>
  <div class="lang">ENG<br>US</div>
  <div class="tray net">
    <svg viewBox="0 0 16 16"><path d="M1 6c4-4 10-4 14 0M3.500 8.500c3-3 6-3 9 0M6 11c1-1 3-1 4 0"/><circle cx="8" cy="13" r="1"/></svg>
    <svg viewBox="0 0 16 16"><path d="M1 6h3l4-4v12l-4-4H1zM10 5c2 2 2 4 0 6M12.500 3c3 3 3 7 0 10"/></svg>
    <svg viewBox="0 0 16 16"><rect x="4" y="5" width="10" height="7" rx="1"/><path d="M15 7v3"/><path d="M2 2v5h5c0 3-3 5-5 5" stroke-width="2"/></svg>
  </div>
  <div class="date">9:58 a. m.<br>26/12/2025</div>
  <svg class="bell" viewBox="0 0 16 16"><path d="M9 2H3v12h10V8M9 2v4M6 10l5-6M5 11h4M10 3h4l-4 5h4"/></svg>
</div>
</body>
</html>
```

FILE: styles.css
```css
* { box-sizing: border-box; }
body { margin: 0; height: 100vh; min-height: 720px; display: flex; flex-direction: column; position: relative; overflow: hidden; background: #1d1e21; color: #dedee0; font: 10px/12px Roboto, "Noto Sans", sans-serif; }
button, input, select { font: inherit; color: inherit; background: none; border: 0; padding: 0; margin: 0; }
button { display: flex; align-items: center; justify-content: center; white-space: nowrap; }
input, select { min-width: 0; outline: 0; }
svg { width: 16px; height: 16px; flex: none; fill: none; stroke: currentColor; stroke-width: 1.2; display: block; }
p, h2 { margin: 0; }
em, i { font-style: normal; }
.defs { position: absolute; width: 0; height: 0; }
.grow { flex: 1; }
.grow2 { flex: 2; }
.gold { color: #d79a2b; }
.neg { color: #a72b43; }

/* browser chrome */
.tabstrip { flex: none; height: 33px; display: flex; align-items: center; background: #1f1f1f; }
.tab { align-self: flex-end; width: 194px; height: 28px; margin-left: 10px; padding: 0 8px 4px 7px; display: flex; align-items: center; gap: 6px; background: #3b3b3b; border-radius: 8px 8px 0 0; font: 11px/14px "Open Sans", sans-serif; color: #e2e2e2; }
.tab span { flex: 1; white-space: nowrap; overflow: hidden; font-size: 10px; }
.tab .favicon { width: 13px; height: 15px; }
.newtab { width: 32px; }
.gemini { width: 67px; height: 23px; gap: 5px; border-radius: 8px; background: #3a3a3c; font: 600 10px/14px "Open Sans", sans-serif; }
.gemini svg { width: 11px; height: 11px; }
.vr { width: 1px; height: 14px; background: #505050; margin: 0 8px; }
.winbtns { display: flex; }
.winbtns button { width: 38px; }
.winbtns svg { width: 11px; height: 11px; }
.urlbar { flex: none; height: 41px; display: flex; align-items: center; padding: 0 3px 0 4px; background: #3b3b3b; color: #d2d2d2; }
.urlbar button { width: 30px; }
.urlbar svg { width: 14px; height: 14px; }
.urlbar .dim { color: #7a7a7a; }
.omnibox { flex: 1; height: 29px; margin-left: 6px; padding: 0 4px 0 3px; display: flex; align-items: center; border-radius: 14px; background: #282828; }
.siteinfo { width: 22px; height: 22px; border-radius: 11px; background: #3a3a3a; display: flex; align-items: center; justify-content: center; }
.omnibox input { flex: 1; padding-left: 6px; font: 11px/16px "Open Sans", sans-serif; color: #e8e8e8; }
.omnibox button { width: 27px; }
.urlbar .ext { width: 32px; margin-left: 7px; }
.urlbar .ext2 { width: 27px; }

/* application shell */
.app { flex: 1; min-height: 0; display: flex; background: #1c1d21; }
.side { width: 43px; flex: none; padding: 6px 2px 2px 0; display: flex; flex-direction: column; align-items: center; background: #2a2a2e; color: #545458; }
.side button { width: 40px; height: 31px; flex: none; }
.side button svg { width: 21px; height: 21px; }
.side .on { color: #d8d8da; }
.side .out { height: 20px; }
.brand { font: 700 7px/8px Roboto, sans-serif; color: #eee; height: 10px; }
.brandx { width: 28px; height: 28px; background: #fff; margin-bottom: 8px; }
.brandx svg { width: 28px; height: 28px; }
.side .tv { width: 23px; height: 26px; margin: 5px 0 3px; flex-direction: column; justify-content: flex-start; border-radius: 4px; overflow: hidden; background: #c01a12; outline: 1px solid #e02b19; }
.tv b { width: 23px; background: #b3f43c; color: #22320e; font: 700 11px/18px Roboto, sans-serif; }
.tv em { font: 700 7px/8px Roboto, sans-serif; color: #510803; }
.work { flex: 1; min-width: 0; margin-left: 2px; padding-right: 3px; display: flex; flex-direction: column; }
.accountbar { flex: none; height: 28px; padding-top: 1px; display: flex; align-items: center; gap: 3px; font: 700 7px/10px Roboto, sans-serif; }
.acct { width: 129px; height: 22px; padding: 0 6px 0 8px; display: flex; align-items: center; gap: 3px; border: 1px solid #3a3b3f; background: #17181b; white-space: nowrap; font-weight: 500; }
.acct b, .acct2 b { color: #edc123; }
.tri { border: 3px solid transparent; border-top-color: #ddd; border-bottom: 0; margin-left: auto; }
.stat { height: 23px; padding: 0 8px; display: flex; align-items: center; border-radius: 3px; background: #232428; }
.loss { background: #bf3640; color: #f6dcde; }
.info { width: 16px; height: 23px; background: #2b2c30; border-radius: 3px; }
.info svg { width: 12px; height: 12px; }
.feed { font-weight: 400; font-size: 6px; color: #a0a0a3; }
.sig { width: 18px; height: 9px; }
.layout { appearance: none; width: 153px; height: 20px; margin-left: 2px; padding: 0 5px; border: 1px solid #d0d0d2; font-weight: 500; font-size: 8px; }
.accountbar .mini { width: 15px; }
.mini svg { width: 10px; height: 10px; }
.panels { flex: 1; min-height: 0; display: flex; gap: 7px; }
.chart, .order, .sales, .quotes { background: #2a2a2e; }
.chart { flex: 1; min-width: 0; display: flex; flex-direction: column; border-left: 1px solid #34343a; }
.right { width: 325px; flex: none; display: flex; flex-direction: column; gap: 5px; }
.order { flex: 1; min-height: 0; padding: 0 4px; }
.sales { height: 84px; flex: none; padding: 0 4px; overflow: hidden; }
.phead { flex: none; height: 22px; display: flex; align-items: center; gap: 2px; border-bottom: 1px solid #47474b; padding-right: 2px; }
.phead h2 { height: 22px; padding: 0 6px 0 5px; display: flex; align-items: center; gap: 4px; border-bottom: 2px solid #eee; font: 700 9px/12px Roboto, sans-serif; color: #ececee; }
.right .phead h2 { padding-left: 3px; gap: 3px; }
.phead h2 svg { width: 11px; height: 11px; }
.pop { width: 11px; height: 11px; }
.box { width: 10px; height: 10px; border: 1px solid #45454a; }

/* chart toolbars */
.ctools { flex: none; height: 26px; padding-left: 5px; display: flex; align-items: center; font: 600 9px/11px "Open Sans", sans-serif; color: #d6d6d9; }
.ctools svg { width: 15px; height: 15px; }
.ctools .txt { gap: 3px; justify-content: flex-start; }
.ctools .txt svg, .ctools .pref svg, .ctools .c82 svg, .ctools .c14 svg { width: 10px; height: 10px; }
.ctools .pref svg { width: 8px; height: 8px; stroke-width: 2; }
.ctools .ind, .ctools .pref, .ctools .c82 { gap: 3px; }
.sep { width: 1px; height: 14px; margin: 0 3px; background: #a5a5a8; flex: none; }
.faint { opacity: .25; }
.save { flex-direction: column; }
.save small { font-size: 6px; line-height: 6px; color: #c8862a; }
.c14 { width: 14px; } .c18 { width: 18px; } .c20 { width: 20px; } .c24 { width: 24px; } .c26 { width: 26px; }
.c44 { width: 44px; } .c61 { width: 61px; } .c66 { width: 66px; } .c72 { width: 72px; } .c82 { width: 82px; }
.cbody { flex: 1; min-height: 0; display: flex; }
.draw { width: 37px; flex: none; padding: 7px 3px 0 0; display: flex; flex-direction: column; align-items: center; color: #b6b6b9; }
.draw button { width: 24px; height: 24px; flex: none; }
.draw hr { width: 25px; height: 2px; margin: 3px 0 4px; border: 0; background: #a5a5a8; }
.draw .star { width: 21px; height: 21px; margin-top: 11px; background: #e8a523; border-radius: 2px; }
.draw .last { height: 20px; }
.draw .last svg { width: 14px; height: 14px; }
.cmain { flex: 1; min-width: 0; display: flex; flex-direction: column; }
.plotrow { flex: 1; min-height: 0; display: flex; }
.plot { flex: 1; min-width: 0; position: relative; }
.canvas { position: absolute; inset: 0; width: 100%; height: 100%; stroke-width: 1; }
.g { stroke: #359c7c; stroke-opacity: .75; }
.r { stroke: #df2854; stroke-opacity: .75; }
.body { stroke-width: 4; stroke-opacity: 1; }
.legend { position: absolute; left: 5px; top: 7px; font: 9px/12px "Open Sans", sans-serif; }
.legend p { display: flex; align-items: center; }
.legend b { font-weight: 600; font-size: 10px; }
.live { width: 8px; height: 8px; margin: 0 12px 0 10px; border: 2px solid #14594c; border-radius: 4px; background: #35b090; }
.legend span { margin-right: 5px; font-weight: 600; }
.legend em { font: 8px/10px Roboto, sans-serif; color: #b02544; }
.legend .lk { margin-top: 4px; gap: 3px; font-weight: 600; }
.legend .lk svg { width: 11px; height: 11px; }
.legend .up { padding-left: 7px; line-height: 16px; }
.bracket { position: absolute; right: 7px; top: 5px; width: 58px; height: 22px; background: #1a1a1d; text-align: center; font: 7px/10px Roboto, sans-serif; }
.bracket b, .bracket u { display: block; }
.tvlogo { position: absolute; left: 8px; bottom: 9px; width: 20px; height: 20px; }
.addp { position: absolute; right: 2px; top: 47.2%; width: 12px; height: 12px; margin-top: -6px; }
.prices { width: 44px; flex: none; position: relative; padding: 4px 5px 30px 0; display: flex; flex-direction: column; justify-content: space-between; align-items: flex-end; font-size: 8px; color: #b0b0b3; }
.prices span { height: 12px; line-height: 12px; }
.tag { position: absolute; left: 0; right: 1px; height: 13px; margin-top: -6px; padding-right: 4px; text-align: right; line-height: 13px; color: #fff; border-radius: 1px; }
.blue { background: #3755de; } .green { background: #219b75; } .grey { background: #3a3a40; }
.timerow { flex: none; height: 18px; display: flex; align-items: center; font-size: 8px; color: #b0b0b3; }
.times { flex: 1; position: relative; display: flex; justify-content: space-between; padding: 0 10px 0 20px; }
.times span { width: 24px; text-align: center; }
.times b { position: absolute; left: 270px; top: -1px; width: 74px; height: 14px; line-height: 14px; text-align: center; background: #3a3a42; color: #eee; font-size: 8px; }
.axis { width: 44px; }
.axis svg { width: 11px; height: 11px; }
.ranges { flex: none; height: 28px; padding: 0 2px 0 6px; display: flex; align-items: center; font: 600 9px/12px "Open Sans", sans-serif; color: #cfcfd2; }
.fav { display: flex; padding: 0 0 0 14px; background: #29292b; color: #b8b8ba; }
.fav button { width: 25px; height: 24px; }
.ranges .clock { width: 80px; font-weight: 500; }

/* order ticket */
.frow { display: flex; align-items: flex-start; }
.frow .field { flex: 1; margin-top: 9px; }
.field { position: relative; height: 25px; margin-top: 8px; border: 1px solid #4b4b50; border-radius: 2px; }
.field label { position: absolute; left: 7px; top: -6px; padding: 0 2px; font-size: 7px; line-height: 10px; background: #2a2a2e; color: #b5b5b8; }
.field select, .field input { display: block; width: 100%; height: 22px; padding: 0 8px; font: 500 10px/14px Roboto, sans-serif; color: #ececee; appearance: none; }
.field:has(select)::after { content: ""; position: absolute; right: 7px; top: 11px; border: 3px solid transparent; border-top-color: #ddd; border-bottom: 0; }
.dot::before { content: ""; position: absolute; left: 5px; top: 10px; width: 4px; height: 4px; border-radius: 2px; background: #4aa058; }
.field.dot select { padding-left: 14px; }
.cog { width: 20px; height: 24px; margin: 8px -4px 0 0; }
.cog svg { width: 11px; height: 11px; }
.quote { margin-top: 9px; height: 24px; display: flex; align-items: center; justify-content: center; gap: 9px; font-size: 7px; line-height: 12px; color: #c0c0c3; }
.bid { padding: 3px 4px; border: 1px solid #3c3c40; border-radius: 8px; }
.mid { text-align: center; }
.mid b { display: block; color: #eee; }
.acct2 { width: 169px; height: 24px; margin: 10px auto 0; padding: 0 7px; display: flex; align-items: center; gap: 3px; border: 1px solid #47474c; white-space: nowrap; font: 700 7px/10px Roboto, sans-serif; }
.nopos { margin-top: 12px; text-align: center; font-weight: 500; font-size: 8px; line-height: 14px; }
.qty { margin-top: 7px; display: flex; justify-content: center; gap: 4px; }
.qty button { width: 14px; height: 14px; border-radius: 7px; background: #4b4b4f; font-size: 7px; }
.qty .gapl { margin-left: 8px; }
.qty .sel { background: #a9a9ab; }
.pb { width: 170px; margin: 3px auto 0; }
.pb .field { height: 24px; }
.pb .field select { height: 20px; font-size: 7px; font-weight: 400; color: #9c9ca0; }
.pb .field::after { opacity: .5; }
.pb .cog { width: 24px; }
.acts { width: 169px; margin: 12px auto 0; display: grid; grid-template-columns: repeat(6, 1fr); gap: 3px 2px; font: 700 7px/9px Roboto, sans-serif; }
.acts button { grid-column: span 3; height: 16px; border-radius: 2px; background: #535357; }
.acts .buy { height: 18px; background: #44a24a; } .acts .sell { height: 18px; background: #bd2c3b; }
.acts .three { grid-column: span 2; background: #414145; color: #6e6e73; font-size: 6px; }
.sales .phead h2 { height: 21px; }
.sales .frow .small { flex: none; width: 36px; height: 23px; margin-left: 5px; margin-top: 7px; }
.sales .small label { font-size: 6px; width: 28px; white-space: nowrap; }
.sales .small input { height: 20px; }
.sales table { width: 100%; margin-top: 8px; border-collapse: collapse; font-size: 7px; line-height: 9px; color: #96969a; table-layout: fixed; }
.sales th { text-align: left; font-weight: 400; width: 36%; padding: 0 0 2px; border-bottom: 1px solid #424246; }
.sales th:first-child { width: 46%; }
.sales td { padding: 1px 0 0; }
.sales th svg { display: inline-block; width: 7px; height: 7px; vertical-align: -1px; }
.sales td.w { color: #fff; }

/* quotes */
.quotes { flex: none; height: 71px; margin-top: 5px; border: 1px solid #3c3c40; }
.qtabs { display: flex; align-items: center; height: 20px; gap: 2px; padding: 0 4px 0 6px; border-bottom: 1px solid #47474b; font-size: 8px; }
.qtabs button { height: 20px; gap: 5px; color: #4f4f54; margin-right: 8px; }
.qtabs .act { color: #f2f2f2; font-weight: 700; border-bottom: 3px solid #ddd; }
.quotes table { width: 100%; table-layout: fixed; border-collapse: collapse; font-size: 7px; line-height: 9px; }
.quotes th, .quotes td { height: 16px; padding: 0; text-align: center; border-bottom: 1px solid #434347; font-weight: 400; color: #9d9da1; }
.quotes td { font-weight: 700; color: #eee; }
.quotes td.neg { color: #a72b43; font-weight: 400; }
.quotes tr > :first-child { text-align: left; padding-left: 6px; }
.quotes tr > :nth-child(2) { text-align: left; }
.quotes td button { margin: 0 auto; font-size: 9px; }
.k1 { width: 17.8%; } .k2 { width: 8.2%; } .k3 { width: 5.6%; }
footer { flex: none; height: 12px; display: flex; justify-content: space-between; font-size: 6px; line-height: 12px; color: #a3a3a6; }
footer span { flex: 1; text-align: center; }
footer span:first-child { text-align: left; }

/* preview windows floating over the page */
.thumb { position: absolute; display: flex; flex-direction: column; align-items: center; background: linear-gradient(#20246d 35%, #171a5a 60%, #09103a 75%); }
.t1 { right: 46px; top: 57px; width: 65px; height: 66px; border: 1px solid #aeb0c4; padding-top: 4px; gap: 1px; }
.t1 .logo { width: 22px; height: 22px; }
.t2 { right: 18px; top: 215px; width: 60px; height: 43px; padding-top: 4px; gap: 3px; }
.t2 .logo { width: 20px; height: 20px; }
.thumb .lines { width: 60px; height: 16px; }
.t2 .lines { height: 12px; }

/* desktop taskbar */
.taskbar { flex: none; height: 40px; display: flex; align-items: center; background: #f0f0f1; color: #5a5a5d; }
.weather { width: 52px; position: relative; }
.weather svg { width: 24px; height: 24px; }
.weather b { position: absolute; left: 26px; top: -2px; width: 13px; height: 13px; border-radius: 7px; background: #c42133; color: #fff; font: 700 9px/13px Roboto, sans-serif; }
.start { margin-left: 52px; width: 40px; }
.start svg { width: 19px; height: 19px; }
.search { width: 179px; height: 26px; margin-left: 4px; padding-left: 8px; display: flex; align-items: center; gap: 7px; border-radius: 13px; background: #fff; }
.search svg { width: 13px; height: 13px; }
.search input { width: 120px; font: 11px/16px "Open Sans", sans-serif; }
.search input::placeholder { color: #77777a; opacity: 1; }
.apps { display: flex; height: 100%; }
.apps button { width: 37px; position: relative; }
.apps svg { width: 20px; height: 20px; }
.apps .chr { background: linear-gradient(#fafafa, #fafafa) center / 30px 32px no-repeat; }
.chr::after, .run::after { content: ""; position: absolute; left: 16px; bottom: 3px; width: 5px; height: 2px; background: #8a8a8c; }
.apps .chr::after { left: 12px; bottom: 4px; width: 13px; background: #1c75bb; }
.ic { font-weight: 700; background: linear-gradient(#39393c, #39393c) center / 16px 18px no-repeat; color: #ddd; }
.apps .ex { background: radial-gradient(circle, #f2e61d 9px, transparent 10px); color: #222; font-size: 11px; }
.tray { display: flex; gap: 10px; }
.net { gap: 4px; }
.lang { width: 46px; text-align: center; font: 10px/14px "Open Sans", sans-serif; }
.date { width: 64px; text-align: right; font: 10px/13px "Open Sans", sans-serif; }
.bell { margin: 0 17px 0 5px; width: 14px; height: 14px; }
```
